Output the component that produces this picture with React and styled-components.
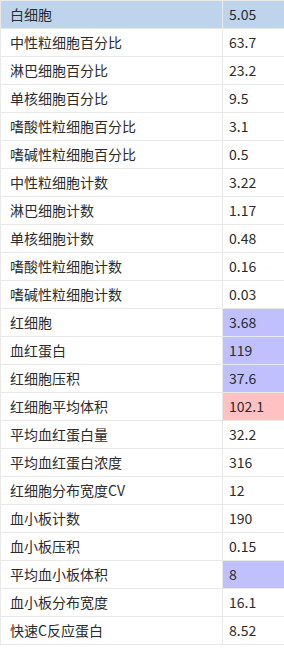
import React from 'react'
import styled, { createGlobalStyle } from 'styled-components'

const GlobalStyle = createGlobalStyle`
  html, body {
    margin: 0;
    padding: 0;
    background: #fff;
    overflow: hidden;
  }
`;

const Wrap = styled.div`
  width: 284px;
  overflow: hidden;
`;

const Table = styled.table`
  width: 300px;
  border-collapse: collapse;
  font-family: "Noto Sans CJK SC", "Noto Sans", sans-serif;
  font-size: 14px;
  color: #2b2b2b;
`;

const Row = styled.tr`
  background: ${(p) => (p.$selected ? '#bed4ec' : '#fff')};
`;

const NameCell = styled.td`
  width: 212px;
  height: 27px;
  padding: 0 0 0 9px;
  border: 1px solid #e9e9e9;
  line-height: 27px;
  white-space: nowrap;
`;

const ValueCell = styled.td`
  height: 27px;
  padding: 0 0 0 6px;
  border: 1px solid #e9e9e9;
  line-height: 27px;
  white-space: nowrap;
  background: ${(p) =>
    p.$flag === 'low' ? '#c0c0ff' : p.$flag === 'high' ? '#ffc1c1' : 'transparent'};
`;

const rows = [
  ['白细胞', '5.05'],
  ['中性粒细胞百分比', '63.7'],
  ['淋巴细胞百分比', '23.2'],
  ['单核细胞百分比', '9.5'],
  ['嗜酸性粒细胞百分比', '3.1'],
  ['嗜碱性粒细胞百分比', '0.5'],
  ['中性粒细胞计数', '3.22'],
  ['淋巴细胞计数', '1.17'],
  ['单核细胞计数', '0.48'],
  ['嗜酸性粒细胞计数', '0.16'],
  ['嗜碱性粒细胞计数', '0.03'],
  ['红细胞', '3.68', 'low'],
  ['血红蛋白', '119', 'low'],
  ['红细胞压积', '37.6', 'low'],
  ['红细胞平均体积', '102.1', 'high'],
  ['平均血红蛋白量', '32.2'],
  ['平均血红蛋白浓度', '316'],
  ['红细胞分布宽度CV', '12'],
  ['血小板计数', '190'],
  ['血小板压积', '0.15'],
  ['平均血小板体积', '8', 'low'],
  ['血小板分布宽度', '16.1'],
  ['快速C反应蛋白', '8.52'],
];

export default function App() {
  return (
    <Wrap>
      <GlobalStyle />
      <Table>
        <tbody>
          {rows.map(([name, value, flag], i) => (
            <Row key={name} $selected={i === 0}>
              <NameCell>{name}</NameCell>
              <ValueCell $flag={flag}>{value}</ValueCell>
            </Row>
          ))}
        </tbody>
      </Table>
    </Wrap>
  )
}
